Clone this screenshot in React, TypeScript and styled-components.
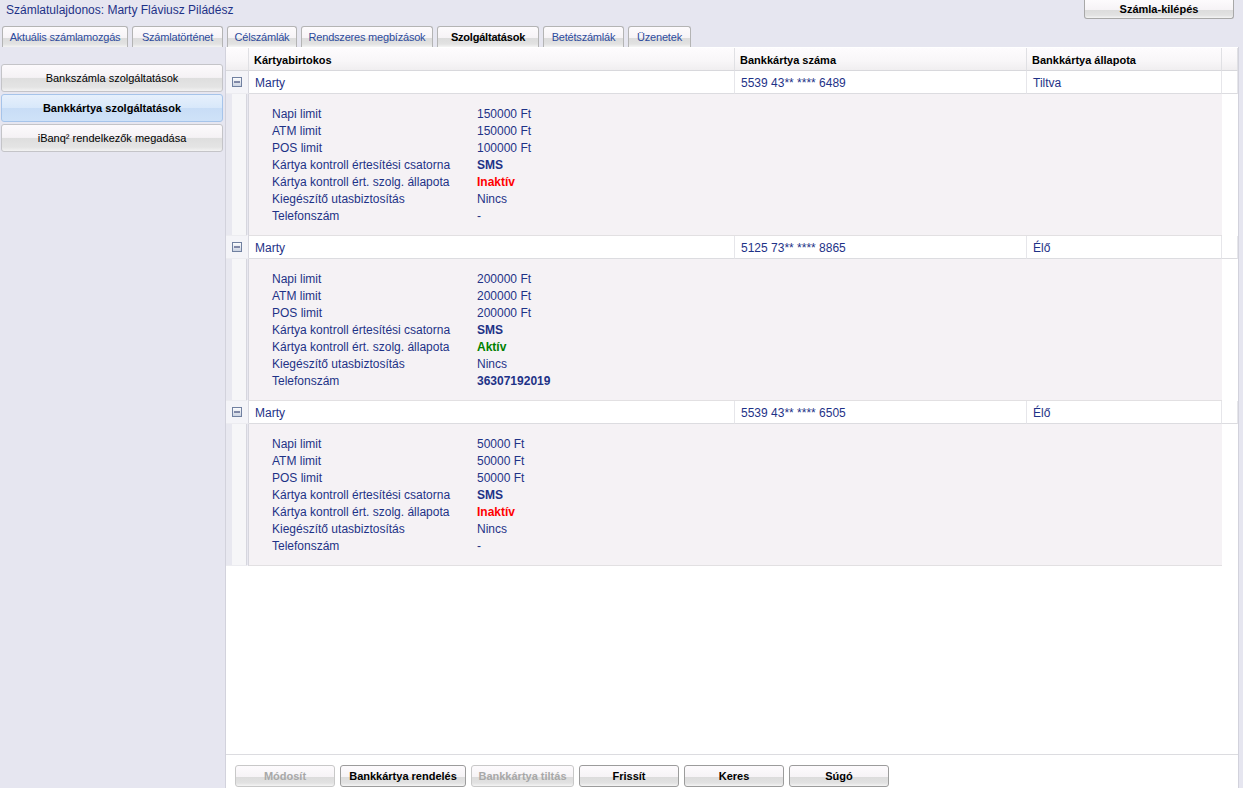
import React from "react";
import styled, { createGlobalStyle, css } from "styled-components";

const Global = createGlobalStyle`
  html, body { margin: 0; padding: 0; }
  body {
    background: #e6e6f0;
    font-family: "Liberation Sans", Arial, sans-serif;
    font-size: 11px;
    color: #1e3287;
    width: 1243px;
    height: 788px;
    overflow: hidden;
  }
  * { box-sizing: border-box; }
`;

const Page = styled.div`
  display: flex;
  flex-direction: column;
  height: 788px;
`;

const TopBar = styled.div`
  display: flex;
  justify-content: space-between;
  align-items: flex-start;
  height: 26px;
  padding: 0 9px 0 6px;
`;

const Title = styled.div`
  font-size: 12px;
  line-height: 12px;
  padding-top: 4px;
  color: #1e3287;
`;

const buttonFace = css`
  background: linear-gradient(
    to bottom,
    #fdfbfd 0%,
    #f6f3f6 55%,
    #dcdcdc 56%,
    #e2e2e2 85%,
    #f4f4f4 100%
  );
`;

const ExitButton = styled.div`
  ${buttonFace};
  width: 150px;
  height: 19px;
  border: 1px solid #a8a8a8;
  border-top: none;
  border-radius: 0 0 3px 3px;
  font-weight: bold;
  color: #000;
  text-align: center;
  line-height: 18px;
  font-size: 11px;
`;

const Tabs = styled.div`
  display: flex;
  gap: 4px;
  padding-left: 2px;
  height: 21px;
  align-items: flex-end;
`;

const Tab = styled.div<{ $active?: boolean; $w: number }>`
  ${buttonFace};
  flex: none;
  width: ${(p) => p.$w}px;
  height: 21px;
  border: 1px solid #b4b4b4;
  border-bottom: none;
  border-radius: 3px 3px 0 0;
  line-height: 20px;
  text-align: center;
  font-size: 11px;
  letter-spacing: -0.2px;
  color: ${(p) => (p.$active ? "#000" : "#2c4a9c")};
  font-weight: ${(p) => (p.$active ? "bold" : "normal")};
  white-space: nowrap;
  overflow: hidden;
`;

const Body = styled.div`
  flex: 1;
  display: flex;
  min-height: 0;
`;

const Sidebar = styled.div`
  width: 225px;
  flex: none;
  display: flex;
  flex-direction: column;
  gap: 2px;
  padding: 17px 2px 0 1px;
`;

const SideButton = styled.div<{ $active?: boolean }>`
  height: 28px;
  border: 1px solid ${(p) => (p.$active ? "#a6c4ea" : "#c4c4c8")};
  border-radius: 3px;
  text-align: center;
  line-height: 26px;
  font-size: 11px;
  color: #000;
  font-weight: ${(p) => (p.$active ? "bold" : "normal")};
  ${(p) =>
    p.$active
      ? css`
          background: linear-gradient(to bottom, #e6f0fc 0%, #d8e8fa 50%, #c8ddf6 51%, #cfe2f8 100%);
        `
      : css`
          background: linear-gradient(to bottom, #fcfafc 0%, #f5f2f5 48%, #dedede 49%, #e4e4e4 85%, #f2f2f2 100%);
        `}
`;

const Main = styled.div`
  width: 1014px;
  flex: none;
  background: #fff;
  border-left: 1px solid #d2d2dc;
  border-right: 1px solid #d2d2dc;
  display: flex;
  flex-direction: column;
`;

const TableArea = styled.div`
  flex: 1;
  padding-top: 1px;
`;

const Grid = styled.div`
  display: grid;
  grid-template-columns: 23px 486px 292px 195px 16px;
`;

const HeadCell = styled.div`
  height: 23px;
  border-right: 1px solid #e0e0e4;
  border-bottom: 1px solid #d8d8dc;
  background: linear-gradient(to bottom, #fefcfe 0%, #f8f6f8 60%, #f0eef0 100%);
  font-weight: bold;
  color: #000;
  padding: 1px 0 0 5px;
  line-height: 22px;
  font-size: 11px;
`;

const Cell = styled.div`
  height: 23px;
  border-right: 1px solid #e6e6ea;
  border-bottom: 1px solid #dcdce0;
  background: #fff;
  padding: 1px 0 0 6px;
  line-height: 22px;
  font-size: 12px;
  color: #1e3287;
`;

const ExpCell = styled.div`
  height: 23px;
  border-right: 1px solid #d8d8e0;
  border-bottom: 1px solid #ececf0;
  background: #f4f4f8;
  display: flex;
  align-items: center;
  justify-content: center;
`;

const SideStrip = styled.div`
  border-right: 3px double #d6d6de;
  background: linear-gradient(to right, #e8e8f0 0px, #e8e8f0 6px, #f6f6f8 6px);
  border-bottom: 1px solid #ececf0;
`;

const Detail = styled.div`
  grid-column: 2 / 5;
  background: #f5f2f5;
  border-bottom: 1px solid #e2e0e2;
  padding: 12px 0 10px 23px;
`;

const DetailLine = styled.div`
  display: grid;
  grid-template-columns: 205px 1fr;
  height: 17px;
  line-height: 17px;
  font-size: 12px;
  color: #1e3287;
`;

const Value = styled.span<{ $tone?: "red" | "green" | "bold" }>`
  font-weight: ${(p) => (p.$tone ? "bold" : "normal")};
  color: ${(p) =>
    p.$tone === "red" ? "#ff0000" : p.$tone === "green" ? "#008000" : "#1e3287"};
`;

const Filler = styled.div`
  background: #fff;
`;

const Footer = styled.div`
  height: 34px;
  border-top: 1px solid #dcdce0;
  display: flex;
  gap: 5px;
  padding: 10px 0 0 9px;
`;

const ActionButton = styled.div<{ $w: number; $disabled?: boolean }>`
  ${buttonFace};
  flex: none;
  width: ${(p) => p.$w}px;
  height: 22px;
  border: 1px solid ${(p) => (p.$disabled ? "#c8c8c8" : "#9c9c9c")};
  border-radius: 3px;
  text-align: center;
  line-height: 20px;
  font-weight: bold;
  font-size: 11px;
  white-space: nowrap;
  overflow: hidden;
  color: ${(p) => (p.$disabled ? "#a8a8a8" : "#000")};
`;

const Minus = () => (
  <svg width="10" height="10" viewBox="0 0 10 10">
    <defs>
      <linearGradient id="mg" x1="0" y1="0" x2="0" y2="1">
        <stop offset="0" stopColor="#ffffff" />
        <stop offset="1" stopColor="#c8d0e0" />
      </linearGradient>
    </defs>
    <rect x="0.5" y="0.5" width="9" height="9" fill="url(#mg)" stroke="#7080a0" />
    <rect x="2" y="4.5" width="6" height="1" fill="#1e2a60" />
  </svg>
);

type Card = {
  number: string;
  status: string;
  napi: string;
  atm: string;
  pos: string;
  active: boolean;
  phone: string;
};

const cards: Card[] = [
  { number: "5539 43** **** 6489", status: "Tiltva", napi: "150000 Ft", atm: "150000 Ft", pos: "100000 Ft", active: false, phone: "-" },
  { number: "5125 73** **** 8865", status: "Élő", napi: "200000 Ft", atm: "200000 Ft", pos: "200000 Ft", active: true, phone: "36307192019" },
  { number: "5539 43** **** 6505", status: "Élő", napi: "50000 Ft", atm: "50000 Ft", pos: "50000 Ft", active: false, phone: "-" },
];

const tabs: { label: string; w: number; active?: boolean }[] = [
  { label: "Aktuális számlamozgás", w: 126 },
  { label: "Számlatörténet", w: 91 },
  { label: "Célszámlák", w: 70 },
  { label: "Rendszeres megbízások", w: 132 },
  { label: "Szolgáltatások", w: 102, active: true },
  { label: "Betétszámlák", w: 81 },
  { label: "Üzenetek", w: 63 },
];

const actions: { label: string; w: number; disabled?: boolean }[] = [
  { label: "Módosít", w: 100, disabled: true },
  { label: "Bankkártya rendelés", w: 126 },
  { label: "Bankkártya tiltás", w: 103, disabled: true },
  { label: "Frissít", w: 100 },
  { label: "Keres", w: 100 },
  { label: "Súgó", w: 100 },
];

export default function App() {
  return (
    <>
      <Global />
      <Page>
        <TopBar>
          <Title>Számlatulajdonos: Marty Fláviusz Piládész</Title>
          <ExitButton>Számla-kilépés</ExitButton>
        </TopBar>
        <Tabs>
          {tabs.map((t) => (
            <Tab key={t.label} $w={t.w} $active={t.active}>
              {t.label}
            </Tab>
          ))}
        </Tabs>
        <Body>
          <Sidebar>
            <SideButton>Bankszámla szolgáltatások</SideButton>
            <SideButton $active>Bankkártya szolgáltatások</SideButton>
            <SideButton>iBanq² rendelkezők megadása</SideButton>
          </Sidebar>
          <Main>
            <TableArea>
              <Grid>
                <HeadCell />
                <HeadCell>Kártyabirtokos</HeadCell>
                <HeadCell>Bankkártya száma</HeadCell>
                <HeadCell>Bankkártya állapota</HeadCell>
                <HeadCell />
                {cards.map((c, i) => (
                  <React.Fragment key={i}>
                    <ExpCell>
                      <Minus />
                    </ExpCell>
                    <Cell>Marty</Cell>
                    <Cell>{c.number}</Cell>
                    <Cell>{c.status}</Cell>
                    <Cell />
                    <SideStrip />
                    <Detail>
                      <DetailLine><span>Napi limit</span><Value>{c.napi}</Value></DetailLine>
                      <DetailLine><span>ATM limit</span><Value>{c.atm}</Value></DetailLine>
                      <DetailLine><span>POS limit</span><Value>{c.pos}</Value></DetailLine>
                      <DetailLine><span>Kártya kontroll értesítési csatorna</span><Value $tone="bold">SMS</Value></DetailLine>
                      <DetailLine>
                        <span>Kártya kontroll ért. szolg. állapota</span>
                        <Value $tone={c.active ? "green" : "red"}>{c.active ? "Aktív" : "Inaktív"}</Value>
                      </DetailLine>
                      <DetailLine><span>Kiegészítő utasbiztosítás</span><Value>Nincs</Value></DetailLine>
                      <DetailLine>
                        <span>Telefonszám</span>
                        <Value $tone={c.phone !== "-" ? "bold" : undefined}>{c.phone}</Value>
                      </DetailLine>
                    </Detail>
                    <Filler />
                  </React.Fragment>
                ))}
              </Grid>
            </TableArea>
            <Footer>
              {actions.map((a) => (
                <ActionButton key={a.label} $w={a.w} $disabled={a.disabled}>
                  {a.label}
                </ActionButton>
              ))}
            </Footer>
          </Main>
        </Body>
      </Page>
    </>
  );
}
